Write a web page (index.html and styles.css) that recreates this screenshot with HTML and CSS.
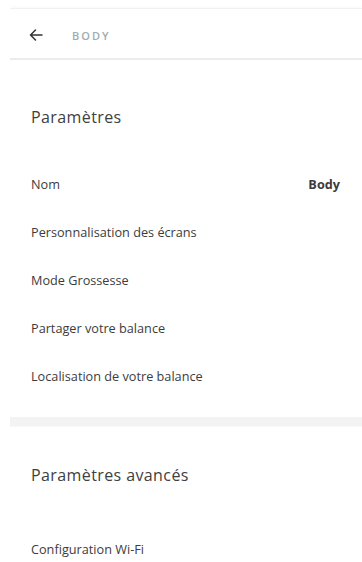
FILE: index.html
```html
<!DOCTYPE html>
<html lang="fr">
<head>
<meta charset="utf-8">
<link rel="stylesheet" href="styles.css">
</head>
<body>
<div class="screen">
  <header class="topbar">
    <svg class="back" width="14" height="12" viewBox="0 0 14 12"><path d="M13 6H1.5M6.5 1L1.5 6l5 5" fill="none" stroke="#333" stroke-width="1.5" stroke-linecap="round" stroke-linejoin="round"/></svg>
    <span class="crumb">BODY</span>
  </header>
  <section class="group first">
    <h2 class="group-title">Paramètres</h2>
    <div class="row"><span>Nom</span><span class="value">Body</span></div>
    <div class="row"><span>Personnalisation des écrans</span></div>
    <div class="row"><span>Mode Grossesse</span></div>
    <div class="row"><span>Partager votre balance</span></div>
    <div class="row"><span>Localisation de votre balance</span></div>
  </section>
  <div class="divider"></div>
  <section class="group second">
    <h2 class="group-title">Paramètres avancés</h2>
    <div class="row"><span>Configuration Wi-Fi</span></div>
  </section>
</div>
</body>
</html>
```
FILE: styles.css
```css
html, body {
  margin: 0;
  padding: 0;
  background: #fff;
  overflow: hidden;
}
body {
  font-family: "Open Sans", "Noto Sans", sans-serif;
  color: #3f3f3f;
}
.screen {
  margin-left: 10px;
  padding-top: 8px;
}
.topbar {
  height: 46px;
  padding-top: 3px;
  display: flex;
  align-items: center;
  border-top: 1px solid #f1f1f1;
  border-bottom: 2px solid #ececec;
  padding-left: 19px;
  box-shadow: 0 -2px 3px rgba(0,0,0,0.02);
}
.back {
  display: block;
}
.crumb {
  margin-left: 29px;
  font-size: 11px;
  font-weight: 600;
  letter-spacing: 2px;
  color: #9eadb1;
}
.group {
  padding-left: 21px;
  padding-right: 22px;
}
.group-title {
  margin: 0;
  font-size: 16px;
  font-weight: 400;
  line-height: 20px;
  color: #404040;
  letter-spacing: 0.4px;
}
.first .group-title {
  padding: 47px 0 33px;
}
.second .group-title {
  padding: 38px 0 40px;
}
.row {
  height: 48px;
  display: flex;
  align-items: center;
  justify-content: space-between;
  font-size: 12.7px;
  color: #3c3c3c;
}
.value {
  font-weight: 700;
  font-size: 12.7px;
}
.divider {
  margin-top: 17px;
  height: 9px;
  background: #f3f3f3;
  border-bottom: 1px solid #f8f8f8;
}
```
